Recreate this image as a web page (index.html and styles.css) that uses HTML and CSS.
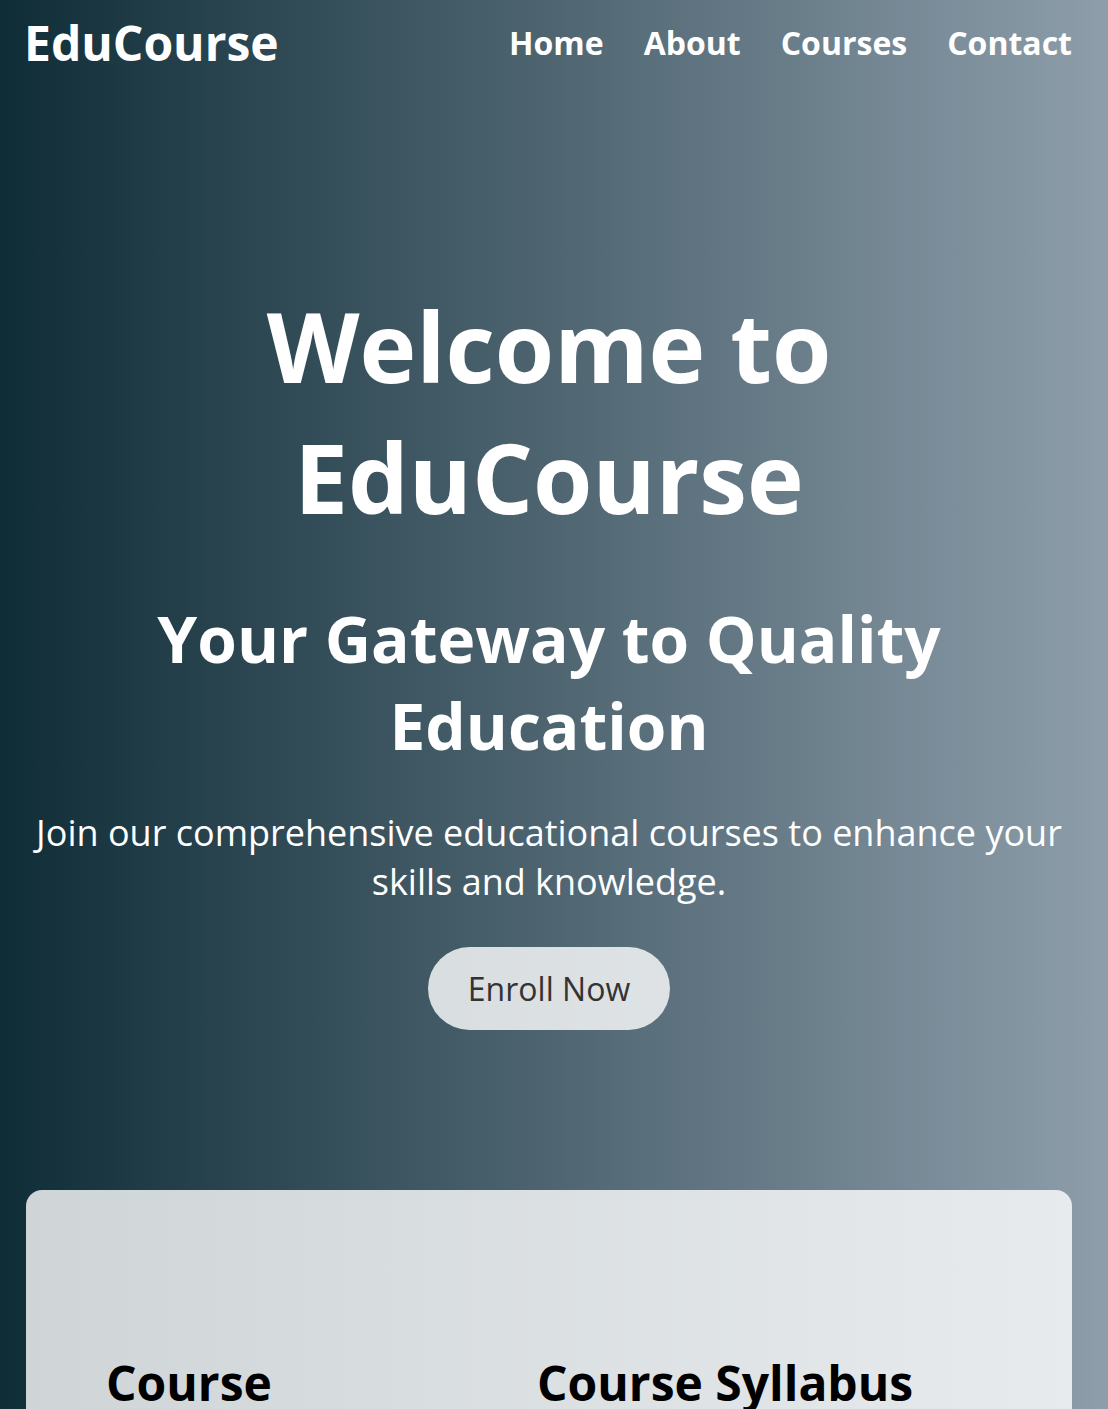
FILE: index.html
```html
<!DOCTYPE html>
<html lang="en">
<head>
<meta charset="utf-8">
<title>EduCourse</title>
<link rel="stylesheet" href="styles.css">
</head>
<body>
<header class="site-header">
  <div class="logo">EduCourse</div>
  <nav class="nav">
    <a href="#" class="nav-link">Home</a>
    <a href="#" class="nav-link">About</a>
    <a href="#" class="nav-link">Courses</a>
    <a href="#" class="nav-link">Contact</a>
  </nav>
</header>
<section class="hero">
  <h1 class="hero-title">Welcome to EduCourse</h1>
  <h2 class="hero-subtitle">Your Gateway to Quality Education</h2>
  <p class="hero-text">Join our comprehensive educational courses to enhance your skills and knowledge.</p>
  <a href="#" class="btn">Enroll Now</a>
</section>
<main class="card">
  <div class="card-grid">
    <div class="col">
      <h2 class="col-title">Course Description</h2>
    </div>
    <div class="col">
      <h2 class="col-title">Course Syllabus</h2>
    </div>
  </div>
</main>
</body>
</html>
```

FILE: styles.css
```css
* { box-sizing: border-box; }
html, body { margin: 0; padding: 0; }
body {
  font-family: "Open Sans", "DejaVu Sans", sans-serif;
  background: linear-gradient(to right, #0f2d37 0%, #8e9eab 100%);
  background-attachment: fixed;
  color: #fff;
  min-height: 1409px;
}
.site-header {
  display: flex;
  justify-content: space-between;
  align-items: center;
  padding: 10px 36px 10px 24px;
}
.logo {
  font-size: 3rem;
  font-weight: 700;
}
.nav {
  display: flex;
  gap: 40px;
}
.nav-link {
  color: #fff;
  text-decoration: none;
  font-size: 2rem;
  font-weight: 700;
}
.hero {
  text-align: center;
  padding: 0 40px 0 30px;
}
.hero-title {
  font-size: 6rem;
  font-weight: 700;
  margin: 0;
  padding: 195px 200px 0;
}
.hero-subtitle {
  font-size: 4rem;
  font-weight: 700;
  margin: 53px 0 39px;
  padding: 0 100px;
}
.hero-text {
  font-size: 2.25rem;
  margin: 0 0 41px;
}
.btn {
  display: inline-block;
  background: rgba(255, 255, 255, 0.8);
  color: #333;
  text-decoration: none;
  font-size: 2rem;
  padding: 20px 40px;
  border-radius: 50px;
}
.card {
  margin: 160px 36px 0 26px;
  background: rgba(255, 255, 255, 0.8);
  border-radius: 16px;
  padding: 120px 80px 80px 80px;
  color: #000;
  min-height: 400px;
}
.card-grid {
  display: grid;
  grid-template-columns: 391px 1fr;
  gap: 40px;
}
.col-title {
  font-size: 3rem;
  font-weight: 700;
  margin: 40px 0;
}
```
